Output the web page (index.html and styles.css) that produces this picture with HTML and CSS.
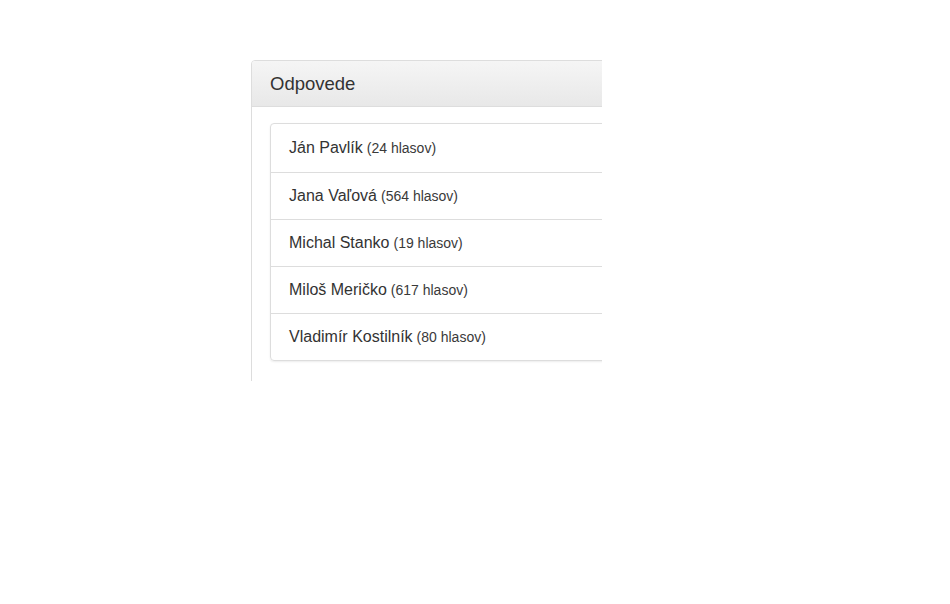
FILE: index.html
```html
<!DOCTYPE html>
<html lang="sk">
<head>
    <meta charset="UTF-8">
    <title>Odpovede</title>
    <link rel="stylesheet" href="styles.css">
</head>
<body>
    <div class="frame">
        <div class="panel">
            <div class="panel-heading">
                <h3 class="panel-title">Odpovede</h3>
            </div>
            <div class="panel-body">
                <ul class="list-group">
                    <li class="list-group-item">Ján Pavlík <small>(24 hlasov)</small></li>
                    <li class="list-group-item">Jana Vaľová <small>(564 hlasov)</small></li>
                    <li class="list-group-item">Michal Stanko <small>(19 hlasov)</small></li>
                    <li class="list-group-item">Miloš Meričko <small>(617 hlasov)</small></li>
                    <li class="list-group-item">Vladimír Kostilník <small>(80 hlasov)</small></li>
                </ul>
            </div>
        </div>
    </div>
</body>
</html>
```

FILE: styles.css
```css
/* Style général */
body {
    font-family: "Liberation Sans", Arial, sans-serif;
    background-color: #fff;
    color: #333;
    margin: 0;
    padding: 0;
}

.frame {
    margin: 60px 0 0 251px;
    width: 351px;
    height: 321px;
    overflow: hidden;
}

.panel {
    width: 700px;
    border: 1px solid #ddd;
    border-radius: 4px;
    background-color: #fff;
    box-shadow: 0 1px 1px rgba(0, 0, 0, 0.05);
}

.panel-heading {
    height: 45px;
    padding: 0 18px;
    display: flex;
    align-items: center;
    background: linear-gradient(to bottom, #f5f5f5, #e8e8e8);
    border-bottom: 1px solid #ddd;
    border-radius: 3px 3px 0 0;
}

.panel-title {
    margin: 0;
    font-size: 18.5px;
    font-weight: normal;
    color: #333;
}

.panel-body {
    padding: 16px 18px 40px;
}

.list-group {
    list-style: none;
    margin: 0;
    padding: 0;
    border: 1px solid #ddd;
    border-radius: 4px;
    box-shadow: 0 1px 2px rgba(0, 0, 0, 0.075);
}

.list-group-item {
    height: 46px;
    padding: 0 18px;
    display: flex;
    align-items: center;
    gap: 4px;
    font-size: 16px;
    color: #333;
    border-top: 1px solid #ddd;
}

.list-group-item:first-child {
    border-top: none;
    height: 48px;
}

.list-group-item small {
    font-size: 14px;
    color: #3a3a3a;
}
```
